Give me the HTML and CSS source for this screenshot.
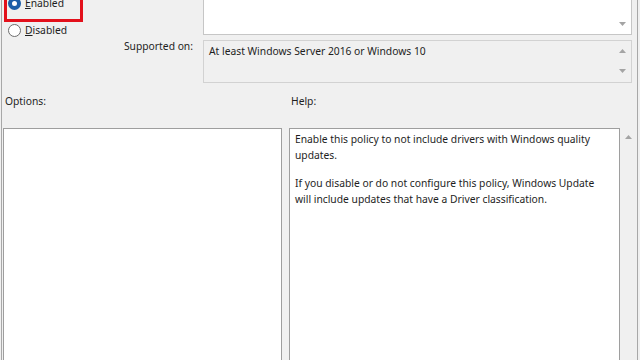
FILE: index.html
```html
<html>
<head>
    <title>Do not include drivers with Windows Updates</title>
<link rel="stylesheet" href="styles.css">
</head>
<body>

<div class="dialog">

  <div class="top">
    <div class="state">
      <div class="annot">
        <div class="radio"><span class="dot checked"></span><span><u>E</u>nabled</span></div>
      </div>
      <div class="radio plain"><span class="dot"></span><span><u>D</u>isabled</span></div>
    </div>

    <div class="box comment">
      <div class="fill"></div>
      <div class="scroll bottom">
        <svg class="arrow" width="7" height="4" viewBox="0 0 7 4"><polygon points="0,0 7,0 3.5,4"/></svg>
      </div>
    </div>

    <div class="supported-label">Supported on:</div>

    <div class="box supported">
      <div class="fill">At least Windows Server 2016 or Windows 10</div>
      <div class="scroll both">
        <svg class="arrow" width="7" height="4" viewBox="0 0 7 4"><polygon points="3.5,0 7,4 0,4"/></svg>
        <svg class="arrow" width="7" height="4" viewBox="0 0 7 4"><polygon points="0,0 7,0 3.5,4"/></svg>
      </div>
    </div>
  </div>

  <div class="captions">
    <div class="caption options-caption">Options:</div>
    <div class="caption">Help:</div>
  </div>

  <div class="panes">
    <div class="box options"></div>
    <div class="box help">
      <p>Enable this policy to not include drivers with Windows quality updates.</p>
      <p>If you disable or do not configure this policy, Windows Update will include updates that have a Driver classification.</p>
    </div>
    <div class="help-scroll">
      <svg class="arrow" width="7" height="4" viewBox="0 0 7 4"><polygon points="3.5,0 7,4 0,4"/></svg>
    </div>
  </div>

</div>

</body>
</html>
```

FILE: styles.css
```css
body {
    margin: 0;
    background-color: #f0f0f0;
    font-family: "Noto Sans", "Liberation Sans", sans-serif;
    font-size: 10.3px;
    color: #1e1e1e;
}

.dialog {
    margin-left: 1px;
    width: 635px;
    height: 360px;
    border-left: 1px solid #a8a8a8;
    border-right: 1px solid #a8a8a8;
    background-color: #f0f0f0;
    overflow: hidden;
    display: flex;
    flex-direction: column;
}

/* upper part: state radios, comment, supported on */

.top {
    display: grid;
    grid-template-columns: 201px 429px;
    grid-template-rows: 61px 43px;
    row-gap: 5px;
    margin-top: -26px;
}

.state {
    grid-row: 1 / 3;
    grid-column: 1;
}

.annot {
    margin-left: 2px;
    width: 79px;
    box-sizing: border-box;
    border: 3px solid #e3101b;
    padding: 18px 0 8px 1px;
}

.radio {
    display: flex;
    align-items: center;
    gap: 4px;
    height: 16px;
}

.radio.plain {
    padding-left: 6px;
}

.dot {
    width: 13px;
    height: 13px;
    box-sizing: border-box;
    border-radius: 50%;
    border: 1px solid #6d6d6d;
    background-color: #ffffff;
}

.dot.checked {
    border: 4px solid #1c5ea8;
}

.supported-label {
    grid-row: 2;
    grid-column: 1;
    text-align: right;
    padding-right: 10px;
    line-height: 12px;
}

.box {
    box-sizing: border-box;
    background-color: #ffffff;
}

.comment {
    grid-row: 1;
    grid-column: 2;
    border: 1px solid #c6c6c6;
    display: flex;
}

.supported {
    grid-row: 2;
    grid-column: 2;
    border: 1px solid #d2d2d2;
    background-color: #f0f0f0;
    display: flex;
}

.fill {
    flex: 1;
    padding: 2px 5px;
    line-height: 16px;
}

.scroll {
    width: 17px;
    display: flex;
    flex-direction: column;
    align-items: center;
}

.scroll.bottom {
    justify-content: flex-end;
    padding-bottom: 8px;
}

.scroll.both {
    justify-content: space-between;
    padding: 8px 0 9px;
}

.arrow {
    fill: #a4a4a4;
}

/* lower part: options and help */

.captions {
    display: flex;
    margin-top: 10px;
    padding-left: 1px;
    line-height: 16px;
}

.caption {
    padding-left: 2px;
}

.options-caption {
    width: 284px;
}

.panes {
    display: flex;
    margin-top: 19px;
    padding-left: 1px;
    height: 260px;
    flex-shrink: 0;
}

.options {
    width: 279px;
    margin-right: 7px;
    border: 1px solid #9e9e9e;
}

.help {
    width: 331px;
    border: 1px solid #9e9e9e;
    padding: 2px 16px 2px 5px;
    line-height: 16px;
}

.help p {
    margin: 0 0 12px 0;
}

.help-scroll {
    width: 17px;
    display: flex;
    justify-content: center;
    padding-top: 7px;
}
```
